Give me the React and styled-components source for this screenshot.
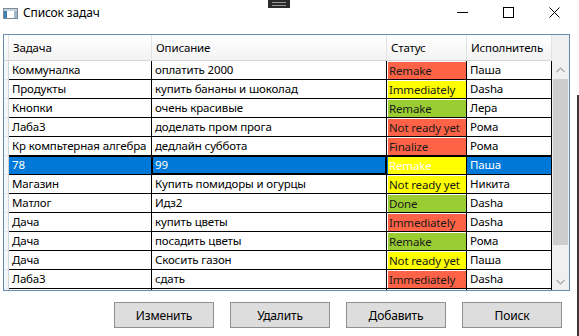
import React from 'react'
import styled, { createGlobalStyle } from 'styled-components'

const GlobalStyle = createGlobalStyle`
  html, body {
    margin: 0;
    padding: 0;
    background: #ffffff;
  }
  body {
    font-family: "Noto Sans", "Liberation Sans", sans-serif;
    font-size: 11.5px;
    letter-spacing: -0.15px;
    color: #000;
  }
`;

const COLORS = {
  red: '#ff6347',
  yellow: '#ffff00',
  green: '#9acd32',
};

// the last row is only a sliver at the bottom edge, so it carries no text
const tasks = [
  { name: 'Коммуналка', desc: 'оплатить 2000', status: 'Remake', color: 'red', who: 'Паша' },
  { name: 'Продукты', desc: 'купить бананы и шоколад', status: 'Immediately', color: 'yellow', who: 'Dasha' },
  { name: 'Кнопки', desc: 'очень красивые', status: 'Remake', color: 'green', who: 'Лера' },
  { name: 'Лаба3', desc: 'доделать пром прога', status: 'Not ready yet', color: 'red', who: 'Рома' },
  { name: 'Кр компьтерная алгебра', desc: 'дедлайн суббота', status: 'Finalize', color: 'red', who: 'Рома' },
  { name: '78', desc: '99', status: 'Remake', color: 'yellow', who: 'Паша', selected: true },
  { name: 'Магазин', desc: 'Купить помидоры и огурцы', status: 'Not ready yet', color: 'yellow', who: 'Никита' },
  { name: 'Матлог', desc: 'Идз2', status: 'Done', color: 'green', who: 'Dasha' },
  { name: 'Дача', desc: 'купить цветы', status: 'Immediately', color: 'red', who: 'Dasha' },
  { name: 'Дача', desc: 'посадить цветы', status: 'Remake', color: 'green', who: 'Рома' },
  { name: 'Дача', desc: 'Скосить газон', status: 'Not ready yet', color: 'yellow', who: 'Паша' },
  { name: 'Лаба3', desc: 'сдать', status: 'Immediately', color: 'red', who: 'Dasha' },
  { name: '', desc: '', status: '', color: 'green', who: '' },
];

const headers = ['Задача', 'Описание', 'Статус', 'Исполнитель'];
const buttons = ['Изменить', 'Удалить', 'Добавить', 'Поиск'];

export default function App() {
  return (
    <Window>
      <GlobalStyle />
      <TitleBar>
        <TitleLeft>
          <WindowIcon width="15" height="11" viewBox="0 0 15 11">
            <rect x="0.5" y="0.5" width="14" height="10" fill="#ffffff" stroke="#7a8a99" />
            <rect x="1" y="1" width="13" height="2" fill="#c7d3de" />
            <rect x="1" y="3" width="3" height="7" fill="#3c7fb1" />
            <rect x="11" y="3" width="3" height="7" fill="#9fb7c9" />
          </WindowIcon>
          <Title>Список задач</Title>
        </TitleLeft>
        <Controls>
          <Control>
            <svg width="11" height="11" viewBox="0 0 11 11">
              <line x1="0" y1="5.5" x2="11" y2="5.5" stroke="#000" />
            </svg>
          </Control>
          <Control>
            <svg width="11" height="11" viewBox="0 0 11 11">
              <rect x="0.5" y="0.5" width="10" height="10" fill="none" stroke="#000" />
            </svg>
          </Control>
          <Control>
            <svg width="11" height="11" viewBox="0 0 11 11">
              <path d="M0.5 0.5 L10.5 10.5 M10.5 0.5 L0.5 10.5" stroke="#000" />
            </svg>
          </Control>
        </Controls>
        <DarkTab>
          <span />
          <span />
        </DarkTab>
      </TitleBar>

      <Content>
        <DataGrid>
          <GridMain>
            <HeaderRow>
              <CornerCell />
              {headers.map((h, i) => (
                <HeaderCell key={i}>{h}</HeaderCell>
              ))}
            </HeaderRow>
            <Body>
              {tasks.map((t, i) => (
                <Row key={i}>
                  <RowHeader />
                  <Cell $selected={t.selected}>{t.name}</Cell>
                  <Cell $selected={t.selected} $focused={t.selected}>{t.desc}</Cell>
                  <StatusCell $selected={t.selected}>
                    <Badge $bg={COLORS[t.color]} $selected={t.selected}>{t.status}</Badge>
                  </StatusCell>
                  <Cell $selected={t.selected}>{t.who}</Cell>
                </Row>
              ))}
            </Body>
          </GridMain>
          <ScrollColumn>
            <HeaderFiller />
            <ScrollBar>
              <ScrollButton>
                <svg width="9" height="6" viewBox="0 0 9 6">
                  <path d="M0.5 5 L4.5 1 L8.5 5" fill="none" stroke="#a6a6a6" strokeWidth="1.2" />
                </svg>
              </ScrollButton>
              <Track>
                <Thumb />
              </Track>
              <ScrollButton>
                <svg width="9" height="6" viewBox="0 0 9 6">
                  <path d="M0.5 1 L4.5 5 L8.5 1" fill="none" stroke="#a6a6a6" strokeWidth="1.2" />
                </svg>
              </ScrollButton>
            </ScrollBar>
          </ScrollColumn>
        </DataGrid>

        <ButtonBar>
          {buttons.map((b) => (
            <Button key={b}>{b}</Button>
          ))}
        </ButtonBar>
      </Content>
      <EdgeShadow />
    </Window>
  )
}

const Window = styled.div`
  position: relative;
  width: 579px;
  height: 336px;
  overflow: hidden;
  background: #ffffff;
`;

const TitleBar = styled.div`
  position: relative;
  height: 31px;
  display: flex;
  align-items: flex-start;
  justify-content: space-between;
`;

const TitleLeft = styled.div`
  display: flex;
  align-items: center;
  gap: 5px;
  padding: 5px 0 0 3px;
`;

const WindowIcon = styled.svg`
  display: block;
`;

const Title = styled.span`
  font-size: 12px;
  line-height: 16px;
`;

const Controls = styled.div`
  display: flex;
  padding-right: 2px;
`;

const Control = styled.div`
  width: 46px;
  height: 30px;
  display: flex;
  align-items: center;
  justify-content: center;
  padding-bottom: 6px;
  box-sizing: border-box;

  svg {
    display: block;
  }
`;

const DarkTab = styled.div`
  position: absolute;
  left: 268px;
  top: 0;
  width: 22px;
  height: 8px;
  background: #2b2b2b;
  display: flex;
  flex-direction: column;
  justify-content: center;
  gap: 2px;
  padding: 0 4px;
  box-sizing: border-box;

  span {
    display: block;
    height: 1px;
    background: #9a9a9a;
  }
`;

const Content = styled.div`
  padding: 3px 0 0 3px;
`;

const DataGrid = styled.div`
  width: 567px;
  height: 257px;
  box-sizing: border-box;
  border: 1px solid #688caf;
  display: flex;
  overflow: hidden;
`;

const GridMain = styled.div`
  width: 548px;
  display: flex;
  flex-direction: column;
`;

const HeaderRow = styled.div`
  display: grid;
  grid-template-columns: 5px 143px 235px 80px 85px;
  height: 25px;
  border-bottom: 1px solid #d5d5d5;
  background: linear-gradient(#ffffff, #f3f3f3);
`;

const CornerCell = styled.div`
  border-right: 1px solid #e2e2e2;
`;

const HeaderCell = styled.div`
  padding: 0 4px;
  line-height: 25px;
  border-right: 1px solid #e2e2e2;
  white-space: nowrap;
  overflow: hidden;
`;

const Body = styled.div`
  height: 230px;
  overflow: hidden;
`;

const Row = styled.div`
  display: grid;
  grid-template-columns: 5px 143px 235px 80px 85px;
  height: 19px;
`;

const RowHeader = styled.div`
  background: #f4f6f8;
  border-right: 1px solid #c9d3dc;
  border-bottom: 1px solid #e3e8ec;
`;

const Cell = styled.div`
  box-sizing: border-box;
  height: 19px;
  padding: 0 3px;
  line-height: 18px;
  border-right: 1px solid #000;
  border-bottom: 1px solid #000;
  white-space: nowrap;
  overflow: hidden;
  background: ${(p) => (p.$selected ? '#0078d7' : '#ffffff')};
  color: ${(p) => (p.$selected ? '#ffffff' : '#000000')};
  box-shadow: ${(p) => (p.$focused ? 'inset 0 0 0 1px #000' : p.$selected ? 'inset 0 1px 0 #000' : 'none')};
`;

const StatusCell = styled.div`
  box-sizing: border-box;
  height: 19px;
  padding: 1px 0 0 1px;
  border-right: 1px solid #000;
  border-bottom: 1px solid #000;
  background: ${(p) => (p.$selected ? '#0078d7' : '#ffffff')};
  box-shadow: ${(p) => (p.$selected ? 'inset 0 1px 0 #000' : 'none')};
`;

const Badge = styled.div`
  height: 17px;
  line-height: 17px;
  padding-left: 1px;
  white-space: nowrap;
  overflow: hidden;
  background: ${(p) => p.$bg};
  color: ${(p) => (p.$selected ? '#ffffff' : '#1a1a1a')};
`;

const ScrollColumn = styled.div`
  width: 17px;
  display: flex;
  flex-direction: column;
`;

const HeaderFiller = styled.div`
  height: 26px;
  background: #f0f0f0;
`;

const ScrollBar = styled.div`
  flex: 1;
  display: flex;
  flex-direction: column;
  background: #f0f0f0;
`;

const ScrollButton = styled.div`
  height: 17px;
  display: flex;
  align-items: center;
  justify-content: center;
`;

const Track = styled.div`
  flex: 1;
  padding: 1px 1px 0;
`;

const Thumb = styled.div`
  height: 166px;
  background: #cdcdcd;
`;

const ButtonBar = styled.div`
  display: flex;
  justify-content: flex-end;
  gap: 16px;
  padding: 11px 17px 0 0;
`;

const Button = styled.div`
  width: 100px;
  height: 26px;
  box-sizing: border-box;
  border: 1px solid #8f8f8f;
  background: #dddddd;
  display: flex;
  align-items: center;
  justify-content: center;
  font-size: 12px;
`;

const EdgeShadow = styled.div`
  position: absolute;
  right: 0;
  top: 95px;
  width: 2px;
  bottom: 0;
  background: #3a3a3a;
`;
